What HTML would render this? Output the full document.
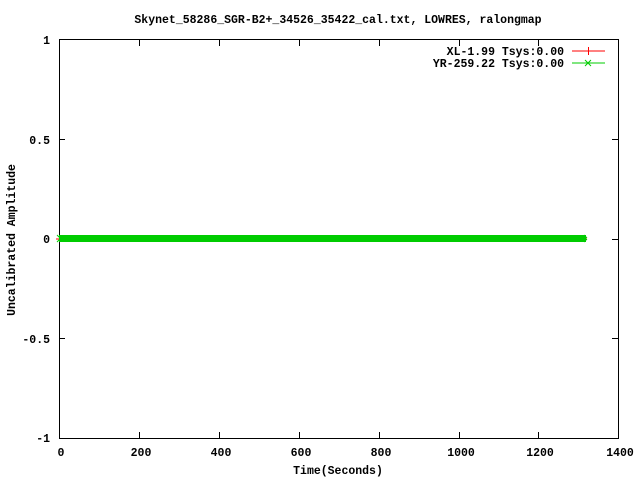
<!DOCTYPE html>
<html><head><meta charset="utf-8"><style>
html,body{margin:0;padding:0;background:#fff;width:640px;height:480px;overflow:hidden}
svg text{font-family:"Liberation Mono","DejaVu Sans Mono",monospace;font-weight:bold;font-size:11.5px;fill:#000}
</style></head><body>
<svg width="640" height="480" xmlns="http://www.w3.org/2000/svg">
<rect width="640" height="480" fill="#fff"/>
<text x="338" y="23" text-anchor="middle">Skynet_58286_SGR-B2+_34526_35422_cal.txt, LOWRES, ralongmap</text>
<g stroke="#000" stroke-width="1" fill="none" shape-rendering="crispEdges">
<rect x="59.5" y="39.5" width="559" height="399"/>
<path d="M59 139.5h6M618 139.5h-6M59 239.5h6M618 239.5h-6M59 338.5h6M618 338.5h-6"/>
<path d="M139.5 438v-6M139.5 40v6M219.5 438v-6M219.5 40v6M299.5 438v-6M299.5 40v6M379.5 438v-6M379.5 40v6M459.5 438v-6M459.5 40v6M538.5 438v-6M538.5 40v6"/>
</g>
<g text-anchor="end">
<text x="50" y="44">1</text>
<text x="50" y="144">0.5</text>
<text x="50" y="243">0</text>
<text x="50" y="343">-0.5</text>
<text x="50" y="442">-1</text>
</g>
<g text-anchor="middle">
<text x="61" y="456">0</text>
<text x="141" y="456">200</text>
<text x="221" y="456">400</text>
<text x="301" y="456">600</text>
<text x="381" y="456">800</text>
<text x="461" y="456">1000</text>
<text x="540" y="456">1200</text>
<text x="620" y="456">1400</text>
<text x="338" y="474">Time(Seconds)</text>
</g>
<text transform="translate(15,240) rotate(-90)" text-anchor="middle">Uncalibrated Amplitude</text>
<g text-anchor="end">
<text x="564" y="55">XL-1.99 Tsys:0.00</text>
<text x="564" y="67">YR-259.22 Tsys:0.00</text>
</g>
<path d="M572 51h33M588.5 47v8" stroke="#f00" stroke-width="1"/>
<path d="M572 63h33M585 60l6 6M585 66l6-6" stroke="#0c0" stroke-width="1"/>
<path d="M56 239h4M582 239h5" stroke="#f00" stroke-width="1"/>
<rect x="59" y="235" width="527" height="7" fill="#0c0"/>
<path d="M57 235l3 3M57 242l3-3M584 235l3 3M584 242l3-3" stroke="#0c0" stroke-width="1"/>
</svg>
</body></html>
